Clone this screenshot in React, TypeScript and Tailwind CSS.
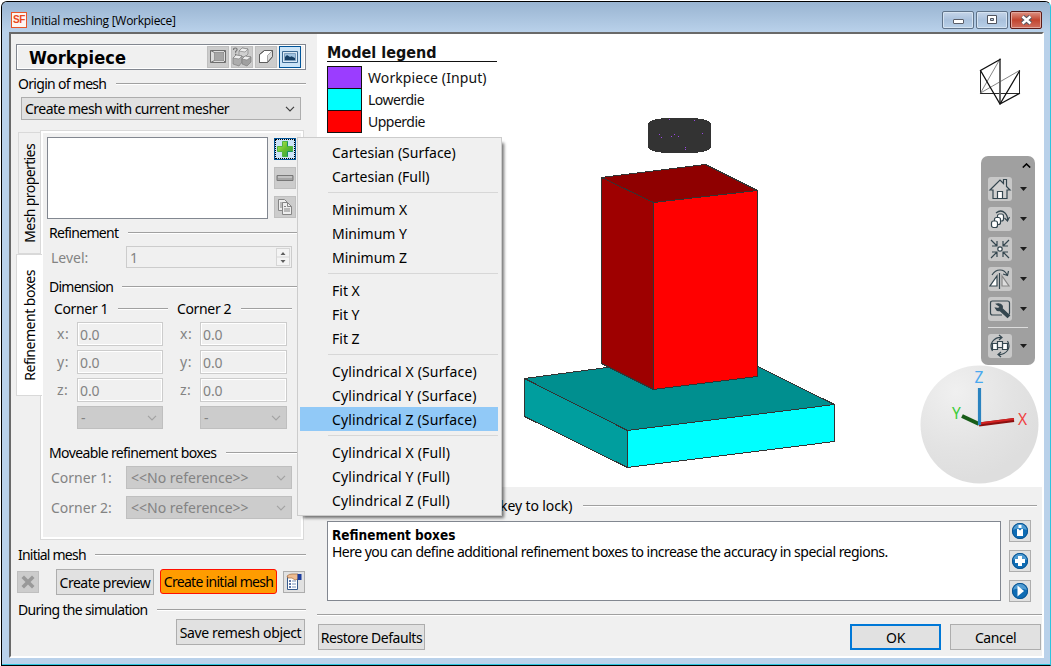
import React from "react";

type Kids = { children?: React.ReactNode };

function Chevron({ className }: { className: string }) {
  return (
    <svg width="10" height="6" viewBox="0 0 10 6" fill="none" strokeWidth="1.2" className={className}>
      <path d="M1 0.8 5 4.8 9 0.8" />
    </svg>
  );
}

function Rule({ className = "" }: { className?: string }) {
  return <div className={"h-[2px] flex-1 border-t border-[#a0a0a0] bg-white " + className} />;
}

function Heading({ label, labelClass, className }: { label: string; labelClass: string; className: string }) {
  return (
    <div className={"flex h-[18px] items-center " + className}>
      <span className={"shrink-0 " + labelClass}>{label}</span>
      <Rule />
    </div>
  );
}

function GreyButton({ children, className = "" }: Kids & { className?: string }) {
  return (
    <div className={"flex h-[22px] w-[22px] shrink-0 items-center justify-center border " + className}>{children}</div>
  );
}

function PushButton({ children, className }: Kids & { className: string }) {
  return (
    <button className={"flex h-[26px] shrink-0 items-center justify-center bg-[#e1e1e1] pt-px text-black " + className}>
      {children}
    </button>
  );
}

function NumberRow({ axis }: { axis: string }) {
  return (
    <div className="flex h-[24px] items-center text-[#838383]">
      <span className="w-[20px] tracking-[0.5px]">{axis}:</span>
      <div className="flex h-[24px] flex-1 items-center border border-[#cccccc] bg-white p-px">
        <span className="flex h-full flex-1 items-center bg-[#f0f0f0] pl-px pt-[2px] tracking-[-0.1px]">0.0</span>
      </div>
    </div>
  );
}

function Corner({ title, className }: { title: string; className: string }) {
  return (
    <div className={className}>
      <Heading label={title} labelClass="w-[64px] tracking-[-0.35px]" className="" />
      <div className="mt-[4px] flex flex-col gap-[4px] pl-[3px] pr-[5px]">
        <NumberRow axis="x" />
        <NumberRow axis="y" />
        <NumberRow axis="z" />
        <div className="ml-[20px] flex h-[23px] items-center justify-between border border-[#bfbfbf] bg-[#cccccc] pl-[3px] pr-[5px] text-[#838383]">
          <span>-</span>
          <Chevron className="stroke-[#a3a3a3]" />
        </div>
      </div>
    </div>
  );
}

function RefRow({ label }: { label: string }) {
  return (
    <div className="flex h-[23px] items-center text-[#838383]">
      <span className="w-[75px] tracking-[0px]">{label}</span>
      <div className="flex h-[23px] w-[166px] items-center justify-between border border-[#bfbfbf] bg-[#cccccc] pl-[4px] pr-[5px]">
        <span className="tracking-[0px]">{"<<No reference>>"}</span>
        <Chevron className="stroke-[#a3a3a3]" />
      </div>
    </div>
  );
}

function TitleBar() {
  return (
    <div className="flex h-[30px] items-start bg-linear-to-b from-[#99b4d1] to-[#b9d1ea] pl-[9px] pr-[8px]">
      <div className="mt-[10px] flex h-[16px] w-[16px] items-center justify-center border border-[#e8572a] bg-[#fff6f1] font-['Liberation_Sans',sans-serif] text-[10px] font-bold leading-none tracking-[-0.3px] text-[#e8491c]">
        SF
      </div>
      <span className="ml-[4px] mt-[10px] flex-1 font-['Open_Sans','Noto_Sans',sans-serif] text-[12px] leading-[18px] tracking-[-0.26px] text-black">
        Initial meshing [Workpiece]
      </span>
      <div className="mt-[9px] flex gap-[2px]">
        <div className="flex h-[18px] w-[32px] items-center justify-center rounded-[2px] border border-[#5f7389] bg-linear-to-b from-[#c5d5e8] via-[#a9c1dc] to-[#b8d0e8] shadow-[inset_0_0_0_1px_#d5e3f1]">
          <div className="mt-[3px] h-[5px] w-[11px] rounded-[1px] border border-[#5a5e68] bg-white" />
        </div>
        <div className="flex h-[18px] w-[32px] items-center justify-center rounded-[2px] border border-[#5f7389] bg-linear-to-b from-[#c5d5e8] via-[#a9c1dc] to-[#b8d0e8] shadow-[inset_0_0_0_1px_#d5e3f1]">
          <svg width="12" height="10" viewBox="0 0 12 10">
            <path d="M1.500 .5h9v8h-9z" fill="#fff" stroke="#50545e" />
            <path d="M4.500 3.500h3v2h-3z" fill="#b5cbe2" stroke="#50545e" />
          </svg>
        </div>
        <div className="flex h-[18px] w-[32px] items-center justify-center rounded-[2px] border border-[#5c1a16] bg-linear-to-b from-[#dc9284] from-0% via-[#c2442e] via-50% to-[#cf6e5e] shadow-[inset_0_0_0_1px_#e3a79c]">
          <svg width="13" height="10" viewBox="0 0 13 10">
            <path d="M2.500 1.500 10.500 8.500M10.500 1.500 2.500 8.500" stroke="#565a64" strokeWidth="4.600" />
            <path d="M2.500 1.500 10.500 8.500M10.500 1.500 2.500 8.500" stroke="#fff" strokeWidth="2.400" />
          </svg>
        </div>
      </div>
    </div>
  );
}

function WorkpieceHeader() {
  return (
    <div className="ml-[5px] flex h-[26px] w-[290px] items-center border border-[#828790] bg-white p-px">
      <div className="flex h-full flex-1 items-center gap-[2px] bg-[#f0f0f0] pr-[3px]">
        <span className="ml-[11px] w-[176px] pt-px font-['DejaVu_Sans_Condensed','DejaVu_Sans',sans-serif] text-[18px] font-bold tracking-[0.15px] text-black">
          Workpiece
        </span>
        <GreyButton className="border-[#bfbfbf] bg-[#cccccc]">
          <svg width="18" height="16" viewBox="0 0 18 16" fill="none" stroke="#6e6e6e" className="shrink-0">
            <path d="M1.500 1.500h15v12h-15z" fill="#ddd" />
            <path d="M5.500 3.500h9v8h-9z" fill="#a6a6a6" stroke="#999" />
            <path d="m1.500 1.500 4 2M1.500 13.500l4-2m11-10-2 2m2 10-2-2" stroke="#777" />
          </svg>
        </GreyButton>
        <GreyButton className="border-[#bfbfbf] bg-[#cccccc]">
          <svg width="20" height="20" viewBox="0 0 20 20" className="shrink-0">
            <g stroke="#777" strokeWidth=".6">
              <path d="m7 4 3-3 6 1v5l-3 3-6-1z" fill="#d0d0d0" />
              <path d="m1 11 3-3 6 1v6l-3 4-6-2z" fill="#adadad" />
              <path d="m10 12 3-3 6 1v5l-4 4-5-2z" fill="#a0a0a0" />
              <path d="m7 4 6 1 3-3-6-1zM1 11l6 1 3-3-6-1zm9 1 5 1 4-3-6-1z" fill="#eee" />
            </g>
            <path d="M1.500 3q0-2 1.800-2t1.800 1.600q0 1-1.500 2v1.200m0 1v1.200" fill="none" stroke="#777" strokeWidth="1.200" />
          </svg>
        </GreyButton>
        <GreyButton className="border-[#bfbfbf] bg-[#cccccc]">
          <svg width="18" height="18" viewBox="0 0 18 18" stroke="#5e5e5e">
            <path d="m2.500 6.500 5-4h8v6l-5 6h-8z" fill="#fff" />
            <path d="m10.500 7.500 5-5v6l-5 6z" fill="#dcdcdc" stroke="#888" strokeWidth=".7" />
            <path d="M2.500 14.500v-8l5-4h8v6l-5 6z" fill="none" />
          </svg>
        </GreyButton>
        <GreyButton className="border-[#005499] bg-[#cce4f7]">
          <svg width="16" height="12" viewBox="0 0 16 12">
            <path d="M.5.5h15v11H.5z" fill="#dbe9f5" stroke="#3c6a94" />
            <path d="M2.500 2.500h11v7h-11z" fill="#9dc1e0" stroke="#7d9fbe" />
            <path d="m3 6 2-2 3 2 1.500-.8L13 7v2H3z" fill="#174066" />
          </svg>
        </GreyButton>
      </div>
      <div className="h-full w-px bg-[#828790]" />
      <div className="w-px" />
    </div>
  );
}

function SideTabs() {
  return (
    <div className="flex w-[25px] shrink-0 flex-col items-end pt-[2px]">
      <div className="flex h-[122px] w-[22px] items-center justify-center border-y border-l border-[#d9d9d9]">
        <span className="rotate-180 whitespace-nowrap tracking-[-0.6px] [writing-mode:vertical-rl]">Mesh properties</span>
      </div>
      <div className="z-10 mr-[-2px] flex h-[142px] w-[26px] items-center justify-center border-y border-l border-[#d9d9d9] bg-white">
        <span className="rotate-180 whitespace-nowrap tracking-[-0.48px] [writing-mode:vertical-rl]">Refinement boxes</span>
      </div>
    </div>
  );
}

function RefinementPage() {
  return (
    <div className="h-[410px] w-[264px] border border-[#d9d9d9] bg-white p-[2px]">
      <div className="h-full bg-[#f0f0f0]">
        <div className="flex pl-[4px] pt-[4px]">
          <div className="h-[82px] w-[221px] border border-[#828790] bg-white" />
          <div className="ml-[6px] flex flex-col gap-[7px] pt-px">
            <GreyButton className="border-[#005499] bg-[#cce4f7]">
              <div className="flex h-full w-full items-center justify-center border border-dotted border-black">
                <svg width="16" height="16" viewBox="0 0 16 16">
                  <defs>
                    <linearGradient id="plus" x2="1" y2="1">
                      <stop stopColor="#b9ee54" />
                      <stop offset=".5" stopColor="#67bd2c" />
                      <stop offset="1" stopColor="#24a05a" />
                    </linearGradient>
                  </defs>
                  <path d="M5.500 .5h5v5h5v5h-5v5h-5v-5h-5v-5h5z" fill="url(#plus)" stroke="#51b540" />
                  <path d="M10.500 10.500v5M10.500 10.500h5M10.500.5v5" stroke="#159164" />
                </svg>
              </div>
            </GreyButton>
            <GreyButton className="border-[#bfbfbf] bg-[#cccccc]">
              <svg width="18" height="7" viewBox="0 0 18 7">
                <path d="M1 .5h16v5H1z" fill="#a5a5a5" stroke="#777" />
                <path d="M2 2h14" stroke="#ddd" />
              </svg>
            </GreyButton>
            <GreyButton className="border-[#bfbfbf] bg-[#cccccc]">
              <svg width="16" height="18" viewBox="0 0 16 18" stroke="#858585" fill="#eee">
                <path d="M1.500 1.500h6l3 3v8h-9z" />
                <path d="M3 5h3M3 7h2M3 9h2" />
                <path d="M5.500 4.500h5l4 4v8h-9z" />
                <path d="M10.500 4.500v4h4M7 8.500h2M7 11h6M7 13h6" fill="none" />
              </svg>
            </GreyButton>
          </div>
        </div>
        <Heading label="Refinement" labelClass="w-[79px] tracking-[-0.7px]" className="ml-[6px] mt-[5px]" />
        <div className="ml-[8px] mt-[4px] flex h-[22px] items-center text-[#838383]">
          <span className="w-[75px] pt-[2px]">Level:</span>
          <div className="flex h-[22px] w-[166px] items-center justify-between border border-[#cccccc] px-px">
            <span className="pl-[2px] pt-[2px]">1</span>
            <div className="flex h-[18px] w-[14px] flex-col border border-[#d6d6d6] bg-[#f4f4f4]">
              <svg width="12" height="16" viewBox="0 0 12 16">
                <path d="M0 8h12" stroke="#d6d6d6" />
                <path d="m3.500 6 2.500-3 2.500 3zM3.500 11h5L6 14z" fill="#606060" />
              </svg>
            </div>
          </div>
        </div>
        <Heading label="Dimension" labelClass="w-[73px] tracking-[-0.75px]" className="ml-[6px] mt-[10px]" />
        <div className="mt-[4px] flex pl-[11px]">
          <Corner title="Corner 1" className="w-[114px]" />
          <Corner title="Corner 2" className="ml-[9px] w-[115px]" />
        </div>
        <Heading label="Moveable refinement boxes" labelClass="w-[177px] tracking-[-0.62px]" className="ml-[6px] mt-[15px]" />
        <div className="ml-[8px] mt-[4px] flex flex-col gap-[7px]">
          <RefRow label="Corner 1:" />
          <RefRow label="Corner 2:" />
        </div>
      </div>
    </div>
  );
}

function LeftPanel() {
  return (
    <div className="flex w-[306px] shrink-0 flex-col pt-[10px]">
      <WorkpieceHeader />
      <Heading label="Origin of mesh" labelClass="w-[98px] tracking-[-0.7px]" className="ml-[7px] mr-[11px] mt-[5px]" />
      <div className="ml-[10px] mt-[4px] flex h-[23px] w-[280px] items-center justify-between border border-[#adadad] bg-[#e1e1e1] pl-[3px] pr-[5px]">
        <span className="tracking-[-0.53px]">Create mesh with current mesher</span>
        <Chevron className="stroke-[#404040]" />
      </div>
      <div className="ml-[4px] mt-[10px] flex">
        <SideTabs />
        <RefinementPage />
      </div>
      <Heading label="Initial mesh" labelClass="w-[77px] tracking-[-0.78px]" className="ml-[7px] mr-[11px] mt-[6px]" />
      <div className="mt-[5px] flex h-[26px] items-center pl-[6px]">
        <GreyButton className="border-[#bfbfbf] bg-[#cccccc]">
          <svg width="16" height="16" viewBox="0 0 16 16">
            <path d="m1.500 4 2.500-2.500 4 4 4-4L14.500 4l-4 4 4 4-2.500 2.500-4-4-4 4L1.500 12l4-4z" fill="#999" />
          </svg>
        </GreyButton>
        <PushButton className="ml-[17px] w-[98px] border border-[#adadad] tracking-[-0.5px]">Create preview</PushButton>
        <button className="ml-[6px] mb-px flex h-[25px] w-[117px] items-center justify-center rounded-[3px] border border-[#ff1000] bg-[#ff9c00] tracking-[-0.7px] text-black">
          Create initial mesh
        </button>
        <GreyButton className="ml-[6px] border-[#adadad] bg-[#e1e1e1]">
          <svg width="18" height="18" viewBox="0 0 18 18">
            <path d="M2.500 3.500h10v13h-10z" fill="#fff" stroke="#375a8c" />
            <path d="M4 8h2M4 11h2M4 14h2" stroke="#2d4e8e" strokeWidth="1.500" />
            <path d="M7 8h4M7 11h4M7 14h4" stroke="#7892b8" />
            <path d="M2 3q2-2 5-2h6v5l-3 1-3-2H3z" fill="#eebc91" stroke="#a26b40" strokeWidth=".7" />
            <path d="M12.500 1h4v6h-4z" fill="#1c3d9e" />
          </svg>
        </GreyButton>
      </div>
      <Heading label="During the simulation" labelClass="w-[139px] tracking-[-0.68px]" className="ml-[7px] mr-[11px] mt-[6px]" />
      <PushButton className="ml-[165px] w-[129px] border border-[#adadad] tracking-[-0.35px]">Save remesh object</PushButton>
    </div>
  );
}

const legend = [
  { name: "Workpiece (Input)", color: "bg-[#9b3dff]", text: "tracking-[0.1px]" },
  { name: "Lowerdie", color: "bg-[#00ffff]", text: "tracking-[-0.5px]" },
  { name: "Upperdie", color: "bg-[#ff0000]", text: "tracking-[-0.5px]" },
];

function Legend() {
  return (
    <div className="pl-[10px] pt-[8px] text-[#111]">
      <div className="h-[20px] w-[170px] border-b border-[#111] pt-px font-['DejaVu_Sans_Condensed','DejaVu_Sans',sans-serif] text-[16px] font-bold leading-[20px] tracking-[0px]">
        Model legend
      </div>
      <div className="mt-[4px] flex w-[35px] flex-col">
        {legend.map((l) => (
          <div key={l.name} className="flex h-[22px] items-center">
            <div className={"h-[23px] w-[35px] shrink-0 self-start border border-[#111] " + l.color} />
            <span className={"ml-[6px] whitespace-nowrap pt-[2px] " + l.text}>{l.name}</span>
          </div>
        ))}
      </div>
    </div>
  );
}

function Scene() {
  return (
    <svg className="absolute inset-0" width="725" height="453" viewBox="317 34 725 453">
      <defs>
        <radialGradient id="ball" cx=".3" cy=".22" r=".75">
          <stop stopColor="#f0f0f0" />
          <stop offset=".65" stopColor="#e3e3e3" />
          <stop offset="1" stopColor="#dedede" />
        </radialGradient>
      </defs>
      <g stroke="#333" strokeWidth="1" strokeLinejoin="round" shapeRendering="crispEdges">
        <path d="m524.500 378.500 203-27 107 53-207 26z" fill="#008f8f" />
        <path d="m524.500 378.500 103 52v37l-103-51z" fill="#009e9e" />
        <path d="m627.500 430.500 207-26v37l-207 26z" fill="#00ffff" />
        <path d="m601.500 177.500 104-13 52 26-104 12z" fill="#8f0000" />
        <path d="m601.500 177.500 52 25v187l-52-26z" fill="#9e0000" />
        <path d="m653.500 202.500 104-12v186l-104 13z" fill="#ff0000" />
      </g>
      <path d="M648 125q0-7.500 31.500-7.500T711 125v21q0 7.500-31.500 7.500T648 146z" fill="#333" shapeRendering="crispEdges" />
      <g fill="#9c48e6">
        <path d="M659 134h1v1h-1zM661 137h1v1h-1zM671 136h1v1h-1zM674 134h1v1h-1zM678 136h1v1h-1zM702 133h1v1h-1zM685 147h1v1h-1zM685 149h1v1h-1zM669 119h1v1h-1zM694 120h1v1h-1z" />
      </g>
      <g fill="none" stroke="#111" strokeLinecap="round">
        <path d="M980.500 93.500v-23M980.500 93.500h39v-23" strokeWidth=".9" />
        <path d="m980.500 93 19.500-34M980.500 93 1019.500 70.500" stroke="#666" strokeWidth=".8" />
        <path d="M1000 59.500v44" stroke="#555" strokeWidth="1.800" />
        <path d="m1000 59.500-19.500 11 19.500 33.500 19.500-33M1000 104l19.500-10.500" strokeWidth="1.300" />
      </g>
      <circle cx="979.500" cy="424.500" r="59" fill="url(#ball)" />
      <path d="m979 424-17-8" stroke="#175c17" strokeWidth="4" />
      <path d="m979 424.500 35-4.500" stroke="#8a1010" strokeWidth="4" />
      <path d="m979 423.500 35-4.500" stroke="#d32222" strokeWidth="2" />
      <path d="M979.500 425v-37" stroke="#2a83c0" strokeWidth="3.200" />
      <g fontFamily="'Noto Sans', sans-serif" fontSize="15.500" textAnchor="middle">
        <text x="979" y="383" fill="#4aa8ef">Z</text>
        <text x="956.500" y="419" fill="#3ccd3c">Y</text>
        <text x="1022.500" y="425" fill="#f04040">X</text>
      </g>
    </svg>
  );
}

function ToolIcon({ kind }: { kind: string }) {
  return (
    <svg width="24" height="24" viewBox="0 0 24 24" fill="none" stroke="#34464f" strokeWidth="1.200">
      {kind === "home" && (
        <g>
          <path d="M2 13 12 3l3.500 3.500V2.500h3v7L22 13h-3v8.500H5V13z" fill="#d0d0d0" />
          <path d="M9.500 14.500h5v7h-5z" fill="#fff" />
        </g>
      )}
      {kind === "rotate" && (
        <g>
          <path d="M8 6q5-4 9 0 3 3 2.500 7.500m-3-2.500 3 3 2-4" />
          <rect x="9.500" y="7" width="6" height="7" rx="2" fill="#fff" />
          <rect x="6.500" y="10.500" width="6" height="7" rx="2" fill="#fff" />
          <rect x="3.500" y="14" width="6" height="6.500" rx="2" fill="#fff" />
        </g>
      )}
      {kind === "center" && (
        <g>
          <path d="m3 3 6 6m0-5v5H4M21 3l-6 6m0-5v5h5M3 21l6-6m-5 0h5v5m12 1-6-6m5 0h-5v5" />
          <circle cx="12" cy="12" r="2.200" fill="#fff" />
        </g>
      )}
      {kind === "mirror" && (
        <g>
          <path d="M4 8q3-5 8-5t7 5m-4-1 4.500 1.500L20.500 4M11.500 6v16" />
          <path d="M9 9v10H2z" fill="#fff" />
          <path d="M14 9v10h7z" fill="#ddd" stroke="#888" />
        </g>
      )}
      {kind === "settings" && (
        <g>
          <path d="M14 18H4.500q-2 0-2-2V6q0-2 2-2h15q2 0 2 2v10q0 1-.8 1.500" />
          <path d="M8.500 7q4-.8 5.500 1.500.8 1.500 0 3l7.500 7-2 2-7.500-7q-3 1-4.500-2.500l3 .5 1.500-2z" fill="#34464f" />
        </g>
      )}
      {kind === "swap" && (
        <g>
          <path d="M4.500 17Q1.500 12 4.500 7.500 8 3 13.500 3.500M11 1l3 2.500-3 2.500M19.500 7q3 5 0 9.500Q16 21 10.500 20.500m2.500 2.500-3-2.500 3-2.500" />
          <path d="M4.500 9.500h5v6h-5zM14.500 9.500h5v6h-5z" fill="#fff" />
          <path d="M9.500 7.500h5v6h-5z" fill="#eee" />
        </g>
      )}
    </svg>
  );
}

function ToolRow({ kind }: { kind: string }) {
  return (
    <div className="flex h-[24px] items-center">
      <div className="h-[24px] w-[24px] rounded-[3px] bg-[#c8c8c8]">
        <ToolIcon kind={kind} />
      </div>
      <svg className="ml-[8px]" width="7" height="4" viewBox="0 0 7 4">
        <path d="M0 0h7L3.500 4z" fill="#1c1c1c" />
      </svg>
    </div>
  );
}

function ViewToolbar() {
  return (
    <div className="absolute left-[664px] top-[122px] flex h-[209px] w-[54px] flex-col rounded-[7px] bg-[#a0a0a0] pl-[7px]">
      <svg className="ml-[34px] mt-[7px]" width="9" height="5" viewBox="0 0 9 5">
        <path d="m.8 4.500 3.700-3.500 3.700 3.500" fill="none" stroke="#000" strokeWidth="1.600" />
      </svg>
      <div className="mt-[9px] flex flex-col gap-[6px]">
        {["home", "rotate", "center", "mirror", "settings"].map((k) => (
          <ToolRow key={k} kind={k} />
        ))}
      </div>
      <div className="mb-[6px] mt-[6px] h-px w-[40px] bg-[#dcdcdc]" />
      <ToolRow kind="swap" />
    </div>
  );
}

function HelpButton({ shape }: { shape: string }) {
  return (
    <GreyButton className="border-[#adadad] bg-[#e1e1e1]">
      <svg width="18" height="18" viewBox="0 0 18 18">
        <circle cx="9" cy="9" r="8" fill="#0f6cb4" />
        <path d="M2 8a7 6.500 0 0 1 14 0q-7-3-14 0" fill="#4f9bd2" />
        <circle cx="9" cy="9" r="7.600" fill="none" stroke="#0b5491" />
        {shape === "info" && <path d="M7.500 3h3v3h-3zM6 7h1.500l1.500 1.500L10.500 7H12v7H6z" fill="#fff" />}
        {shape === "plus" && <path d="M7 4h4v3h3v4h-3v3H7v-3H4V7h3z" fill="#fff" />}
        {shape === "play" && <path d="m6.500 3.500 6.500 5.500-6.500 5.500z" fill="#fff" />}
      </svg>
    </GreyButton>
  );
}

function RightPanel() {
  return (
    <div className="flex min-w-0 flex-1 flex-col">
      <div className="relative h-[453px] bg-white">
        <Scene />
        <Legend />
        <ViewToolbar />
      </div>
      <div className="mt-[9px] flex h-[20px] items-center pr-[5px]">
        <span className="w-[266px] shrink-0 pl-[183px] tracking-[-0.1px]">key to lock)</span>
        <Rule />
      </div>
      <div className="mt-[4px] flex pl-[10px]">
        <div className="mt-px h-[80px] w-[674px] border border-[#828790] bg-white pl-[4px] pt-[5px] leading-[17px]">
          <div className="font-['DejaVu_Sans_Condensed','DejaVu_Sans',sans-serif] text-[13.5px] font-bold tracking-[0px]">Refinement boxes</div>
          <div className="mt-[-1px] tracking-[-0.515px]">
            Here you can define additional refinement boxes to increase the accuracy in special regions.
          </div>
        </div>
        <div className="ml-[8px] flex flex-col gap-[8px]">
          <HelpButton shape="info" />
          <HelpButton shape="plus" />
          <HelpButton shape="play" />
        </div>
      </div>
      <div className="mt-[12px] flex">
        <Rule />
      </div>
      <div className="mt-[8px] flex pl-px pr-px">
        <PushButton className="w-[107px] border border-[#adadad] tracking-[-0.45px]">Restore Defaults</PushButton>
        <PushButton className="ml-auto w-[91px] border-2 border-[#0078d7] tracking-[-0.3px]">OK</PushButton>
        <PushButton className="ml-[9px] w-[91px] border border-[#adadad] tracking-[-0.4px]">Cancel</PushButton>
      </div>
    </div>
  );
}

const menu = [
  ["Cartesian (Surface)", "Cartesian (Full)"],
  ["Minimum X", "Minimum Y", "Minimum Z"],
  ["Fit X", "Fit Y", "Fit Z"],
  ["Cylindrical X (Surface)", "Cylindrical Y (Surface)", "Cylindrical Z (Surface)"],
  ["Cylindrical X (Full)", "Cylindrical Y (Full)", "Cylindrical Z (Full)"],
];

function ContextMenu() {
  return (
    <div className="absolute left-[297px] top-[137px] z-20 h-[379px] w-[205px] border border-[#cccccc] bg-[#f0f0f0] px-[2px] pt-[3px] shadow-[4px_4px_3px_-2px_rgba(0,0,0,0.55)]">
      {menu.map((group, i) => (
        <div key={group[0]}>
          {i > 0 && <div className="mb-[5px] ml-[28px] mr-px mt-[3px] h-px bg-[#d7d7d7]" />}
          {group.map((item) => (
            <div
              key={item}
              className={
                "mr-px flex h-[24px] items-center pl-[32px] " +
                (i > 2 ? "tracking-[0.15px] " : "") +
                (item === "Cylindrical Z (Surface)" ? "relative top-[-1px] bg-[#91c9f7] pt-[2px]" : "")
              }
            >
              {item}
            </div>
          ))}
        </div>
      ))}
    </div>
  );
}

export default function App() {
  return (
    <div className="relative h-[666px] w-[1051px] overflow-hidden bg-white pl-px pt-px font-['Noto_Sans','Open_Sans',sans-serif] text-[14px] leading-[18px] whitespace-nowrap text-black">
      <div className="h-[665px] w-[1050px] overflow-hidden rounded-t-[6px] border border-black border-r-[#2ec4de] bg-[#b9d1ea]">
        <TitleBar />
        <div className="ml-[7px] flex h-[626px] w-[1035px] border-2 border-b-white border-l-[#696969] border-r-white border-t-[#696969] bg-[#f0f0f0]">
          <LeftPanel />
          <RightPanel />
        </div>
        <div className="mt-[6px] h-px bg-[#2ec4de]" />
      </div>
      <ContextMenu />
    </div>
  );
}
